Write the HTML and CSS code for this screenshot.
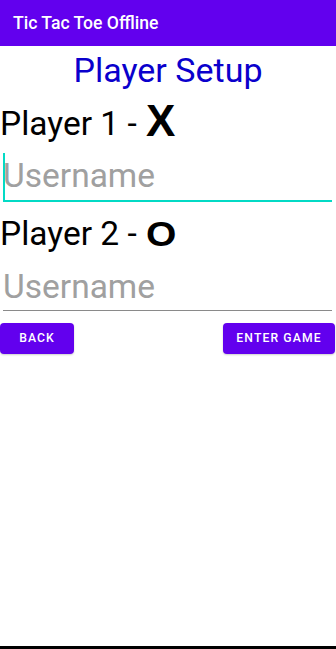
FILE: index.html
```html
<!DOCTYPE html>
<html>
<head>
<meta charset="utf-8">
<link rel="stylesheet" href="styles.css">
</head>
<body>
<div class="screen">
  <header class="appbar"><span class="appbar-title">Tic Tac Toe Offline</span></header>
  <main class="content">
    <h1 class="setup-title">Player Setup</h1>
    <div class="player-label">Player 1 - <span class="mark mark-x">X</span></div>
    <div class="field field-focused"><span class="cursor"></span><span class="placeholder">Username</span></div>
    <div class="player-label player-two">Player 2 - <span class="mark mark-o">O</span></div>
    <div class="field field-idle"><span class="placeholder">Username</span></div>
    <div class="actions">
      <button class="btn btn-back">BACK</button>
      <button class="btn btn-enter">ENTER GAME</button>
    </div>
  </main>
  <div class="navbar"></div>
</div>
</body>
</html>
```
FILE: styles.css
```css
* { box-sizing: border-box; }
html, body { margin: 0; padding: 0; }
body {
  font-family: Roboto, "Liberation Sans", sans-serif;
  background: #ffffff;
  width: 336px;
  height: 649px;
  overflow: hidden;
}
.screen {
  height: 649px;
  display: flex;
  flex-direction: column;
}
.appbar {
  height: 46px;
  background: #6200ee;
  display: flex;
  align-items: center;
  padding-left: 13px;
  flex: none;
}
.appbar-title {
  color: #ffffff;
  font-size: 17.6px;
  font-weight: 500;
  line-height: 1;
  margin-top: 1px;
}
.content {
  flex: 1;
  display: flex;
  flex-direction: column;
}
.setup-title {
  margin: 4px 0 0;
  text-align: center;
  font-size: 34px;
  font-weight: 400;
  line-height: 40px;
  color: #0a00cc;
}
.player-label {
  font-size: 33.5px;
  line-height: 40px;
  color: #000000;
  margin-top: 14px;
  white-space: pre;
}
.player-two { margin-top: 12px; }
.mark {
  font-family: "Liberation Sans", Arial, sans-serif;
  font-weight: 700;
  line-height: 0;
  display: inline-block;
}
.mark-x {
  font-size: 44px;
  margin-left: 1px;
  vertical-align: -1px;
}
.mark-o {
  font-size: 35.5px;
  transform: scaleX(1.1);
  transform-origin: left bottom;
  margin-left: 1px;
  vertical-align: -1px;
}
.field {
  position: relative;
  margin: 8.5px 4px 0 3px;
  height: 49px;
  display: flex;
  align-items: flex-end;
  padding: 0 0 5.5px 0;
}
.field-focused {
  border-bottom: 2px solid #03dac5;
}
.field-idle {
  margin-top: 9px;
  height: 48px;
  border-bottom: 1px solid #8a8a8a;
  padding-bottom: 4.5px;
}
.cursor {
  position: absolute;
  left: 0;
  top: 0;
  bottom: 0;
  width: 2px;
  background: #03dac5;
}
.placeholder {
  font-size: 33.5px;
  line-height: 36px;
  color: #a0a0a0;
}
.actions {
  display: flex;
  justify-content: space-between;
  margin-top: 12px;
}
.btn {
  height: 31px;
  border: none;
  border-radius: 4px;
  background: #6200ee;
  color: #ffffff;
  font-family: Roboto, "Liberation Sans", sans-serif;
  font-size: 12.2px;
  font-weight: 500;
  letter-spacing: 1.1px;
  padding: 0;
  text-align: center;
  box-shadow: 0 1px 2px rgba(0,0,0,0.2);
}
.btn-back { width: 74px; }
.btn-enter { width: 112px; margin-right: 1px; }
.navbar {
  height: 3px;
  background: #000000;
  flex: none;
}
```
